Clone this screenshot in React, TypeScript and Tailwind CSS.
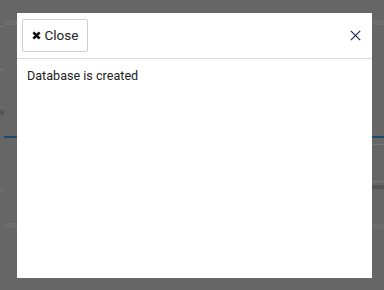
import React from "react";

// faint shapes of the page behind the overlay
const LeftStrip = () => (
  <div className="flex w-[17px] shrink-0 flex-col">
    <div className="ml-[4px] mt-[20px] h-[5px] w-[13px] bg-[#6d6d6d]" />
    <div className="mt-px h-px w-[4px] bg-[#777]" />
    <div className="mt-[42px] h-px w-[4px] bg-[#777]" />
    <div className="mt-[36px] h-px w-[4px] bg-[#707070]" />
    <div className="mt-[3px] h-[5px] w-[4px] bg-[#555]" />
    <div className="ml-[4px] mt-[21px] h-[2px] w-[13px] bg-[#1d4a6b]" />
    <div className="mt-[50px] h-[5px] w-[4px] bg-[#6d6d6d]" />
    <div className="ml-[4px] mt-[30px] h-[5px] w-[13px] bg-[#6d6d6d]" />
  </div>
);

const RightStrip = () => (
  <div className="flex flex-1 flex-col">
    <div className="mt-[20px] h-[5px] w-full bg-[#6d6d6d]" />
    <div className="mt-[111px] h-[2px] w-full bg-[#1d4a6b]" />
    <div className="mt-[6px] h-px w-full bg-[#777]" />
    <div className="mt-[36px] h-px w-full bg-[#777]" />
    <div className="mt-[3px] h-[4px] w-full bg-[#555]" />
    <div className="mt-[35px] h-[5px] w-full bg-[#6d6d6d]" />
  </div>
);

const App = () => {
  return (
    <div
      className="flex h-[290px] w-[384px] overflow-hidden bg-[#666]"
      style={{ fontFamily: "Roboto, 'Liberation Sans', sans-serif" }}
    >
      <LeftStrip />

      <div className="mt-[13px] flex h-[265px] w-[355px] shrink-0 flex-col bg-white">
        <div className="flex items-center justify-between border-b border-[#d9d9d9] px-[5px] py-[6px]">
          <button className="flex h-[33px] w-[66px] items-center justify-center gap-[4px] rounded-[2px] border border-[#cfcfcf] bg-white text-[13.5px] text-[#222]">
            <svg width="9" height="9" viewBox="0 0 10 10">
              <path d="M1.5 1.5 L8.5 8.5 M8.5 1.5 L1.5 8.5" stroke="#111" strokeWidth="3" />
            </svg>
            Close
          </button>
          <button className="mr-[6px] flex h-[12px] w-[12px] items-center justify-center">
            <svg width="11" height="11" viewBox="0 0 11 11">
              <path d="M0.8 0.8 L10.2 10.2 M10.2 0.8 L0.8 10.2" stroke="#1a2a5e" strokeWidth="1.2" />
            </svg>
          </button>
        </div>
        <div className="px-[10px] pt-[8px] text-[12.6px] text-[#222]">Database is created</div>
      </div>

      <RightStrip />
    </div>
  );
};

export default App;
